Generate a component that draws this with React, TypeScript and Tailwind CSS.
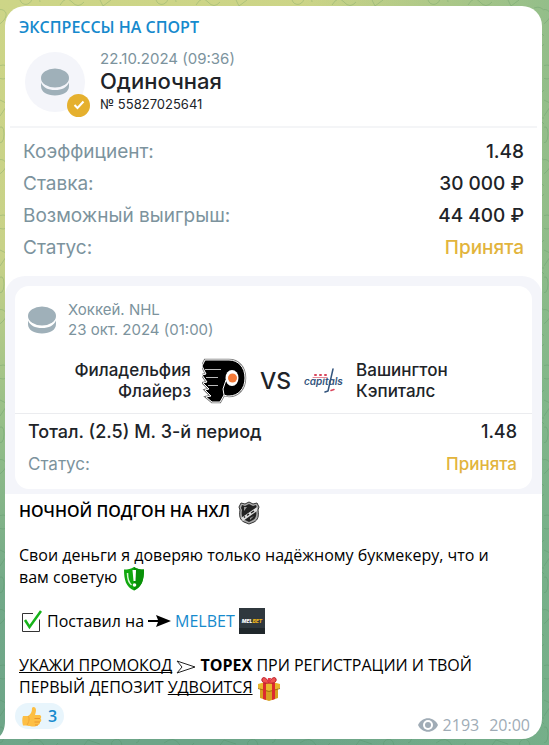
import type { ReactNode } from 'react';

const details = [
  { label: 'Коэффициент:', value: '1.48' },
  { label: 'Ставка:', value: '30 000 ₽' },
  { label: 'Возможный выигрыш:', value: '44 400 ₽' },
  { label: 'Статус:', value: 'Принята', accepted: true },
];

function Doodles() {
  return (
    <svg className="absolute inset-0 h-full w-full" fill="none" stroke="#3f7d4c" strokeOpacity="0.22" aria-hidden="true">
      <defs>
        <pattern id="doodles" width="136" height="150" patternUnits="userSpaceOnUse">
          <path d="M-6 12c8-6 16 0 10 8s-14 4-10 14" />
          <circle cx="3" cy="72" r="7" />
          <path d="M0 100l8 4-8 12M-4 130q8-8 8 4t-8 8" />
          <path d="M20 0c2 6 10 6 12-1s8-2 8 3M60 5q6-10 12-3t12 0M100 0l3 6 8-6" />
          <path d="M28 143q10-8 16 2t14-2M80 150l8-10 12 4M112 146a5 5 0 1 1 8 2" />
          <circle cx="132" cy="40" r="6" />
          <path d="M126 8c10-4 10 8 18 4M126 100l14-14M130 118h12v12z" />
        </pattern>
      </defs>
      <rect width="100%" height="100%" fill="url(#doodles)" stroke="none" />
    </svg>
  );
}

function Puck() {
  return (
    <svg width="30" height="28" viewBox="0 0 30 28" fill="#9fb0b9" aria-hidden="true">
      <ellipse cx="15" cy="10" rx="14" ry="9.5" />
      <path d="M1 14.500c2 5 7 7.500 14 7.500s12-2.500 14-7.500V18c0 6-6 9.500-14 9.500S1 24 1 18z" />
    </svg>
  );
}

function FlyersLogo() {
  return (
    <svg width="46" height="46" viewBox="0 0 46 46" aria-hidden="true">
      <path
        d="M3 2h24c9 0 16 7 16 18s-7 18-16 18c-2 0-4-.5-5-1l-4 7h-8l-6-5 5-1-6-6 4-1-6-6 4-1-5-7 4-1-4-8z"
        fill="#000"
        stroke="#777"
        strokeWidth="2.500"
      />
      <path
        d="M3 2h24c9 0 16 7 16 18s-7 18-16 18c-2 0-4-.5-5-1l-4 7h-8l-6-5 5-1-6-6 4-1-6-6 4-1-5-7 4-1-4-8z"
        fill="#000"
        stroke="#fff"
        strokeWidth="1"
      />
      <path d="M3 11.500h16M4 19.500h12M6 27.500h10" fill="none" stroke="#bbb" strokeWidth="1" />
      <path d="M22 37l-1-6 3-9" fill="none" stroke="#fff" strokeWidth="1" />
      <ellipse cx="30" cy="20" rx="6.500" ry="8" fill="#fff" />
      <circle cx="30.500" cy="20" r="4.500" fill="#f47a38" />
    </svg>
  );
}

function CapitalsLogo() {
  return (
    <svg width="42" height="26" viewBox="0 0 42 26" fill="none" strokeLinecap="round" strokeLinejoin="round" aria-hidden="true">
      <text x="1" y="17" fontSize="10" fontWeight="600" fontStyle="italic" fontFamily="Inter, sans-serif" fill="#34557d">
        capitals
      </text>
      <path d="M30 1l-5 22-3 1" stroke="#34557d" strokeWidth="1.500" />
      <path d="M10 9.500h14" stroke="#e58a98" strokeWidth="1" />
      <path d="M12 7h1M17 7h1M22 7h1" stroke="#d9435a" strokeWidth="2" />
      <path d="M28 22.500l3-1" stroke="#d9435a" strokeWidth="1.500" />
    </svg>
  );
}

function NhlIcon() {
  return (
    <svg className="ml-1 inline-block align-middle" width="22" height="24" viewBox="0 0 22 24" aria-hidden="true">
      <path d="M3 2l4 1 4-2 4 2 4-1 2 4-1 3c1 6 0 10-4 12l-5 2-5-2c-4-2-5-6-4-12L1 6z" fill="#aaa" stroke="#333" strokeWidth="1" />
      <path d="M4 4l3 1 4-2 4 2 3-1 1 3-1 2c1 5 0 8-3 10l-4 2-4-2c-3-2-4-5-3-10L3 7z" fill="#222" />
      <path d="M3 17L19 6v4L5 20z" fill="#ddd" />
      <path d="M6 16.500l1-1M9 14.500l2-1.500M13 12l3-2" stroke="#222" strokeWidth="1.500" />
      <path d="M6 6h3l-3 4zM16 15l-4 4v-2z" fill="#999" />
    </svg>
  );
}

function ShieldIcon() {
  return (
    <svg className="ml-[2px] inline-block align-middle" width="22" height="25" viewBox="0 0 22 25" aria-hidden="true">
      <path d="M11 1c3 2 6 2.500 10 2.500C21 14 19 21 11 24.500 3 21 1 14 1 3.500 5 3.500 8 3 11 1z" fill="#11a80f" />
      <path d="M11 1c3 2 6 2.500 10 2.500C21 14 19 21 11 24.500z" fill="#099008" />
      <path d="M9.500 4h3.500l-.5 11h-2z" fill="#fff" />
      <circle cx="11.500" cy="19" r="1.800" fill="#fff" />
      <path d="M4.500 7c0 6 1 9.500 4 12" fill="none" stroke="#d9f5d4" strokeWidth="1.500" />
    </svg>
  );
}

function CheckIcon() {
  return (
    <svg width="24" height="24" viewBox="0 0 24 24" fill="none" aria-hidden="true">
      <path d="M14 4.500H3.500v18h17v-12" stroke="#333" strokeWidth="1" />
      <path d="M6 11l4.500 7L22 2" stroke="#17b31a" strokeWidth="2.500" />
    </svg>
  );
}

function MelbetIcon() {
  return (
    <svg width="26" height="26" viewBox="0 0 26 26" aria-hidden="true">
      <rect width="26" height="26" fill="#2f383e" />
      <path d="M0 20h26v6H0z" fill="#20272b" />
      <text x="13" y="15" textAnchor="middle" fontSize="5" fontWeight="800" fontStyle="italic" fontFamily="Inter, sans-serif" fill="#fff">
        MEL<tspan fill="#f0b517">BET</tspan>
      </text>
    </svg>
  );
}

function GiftIcon() {
  return (
    <svg className="inline-block align-middle" width="24" height="24" viewBox="0 0 24 24" aria-hidden="true">
      <path d="M3 11l9 2 9-2v10l-9 3-9-3z" fill="#d7a021" />
      <path d="M1 7l11-3 11 3v4l-11 3L1 11z" fill="#e9b72e" />
      <path d="M1 11l11 3 11-3v1l-11 3-11-3z" fill="#a5700e" />
      <path d="M6 6l3-1v18l-3-1zM15 5l3 1v16l-3 1z" fill="#dd2a2f" />
      <path d="M12 6C8 7 4 5 5 2s5-1 7 4c2-5 6-7 7-4s-3 5-7 4z" fill="#ef5350" stroke="#b71c2a" strokeWidth="1" />
      <path d="M10 5l1-4h3l-1 5z" fill="#e53945" />
    </svg>
  );
}

function ThumbIcon() {
  return (
    <svg width="20" height="21" viewBox="0 0 20 21" aria-hidden="true">
      <path
        d="M1 10h5c3-2 4-4 4-8 1-2 4-1 4 2 0 2-.5 3-1 5h4c2 0 3 2 1.500 3.500C20 14 19 16 18 16c0 2-1 3-2 3-1 1.500-3 1.500-5 1.500-3 0-5-1-10-1-1-3-1-7 0-9.500z"
        fill="#fdbf45"
      />
      <path d="M12.500 12.500h5.500M12.500 16h5.500M13 19h3" stroke="#e8952e" strokeWidth="1" />
      <path d="M6 10c2 2 1 6-1 9" fill="none" stroke="#f0a535" strokeWidth="1" />
    </svg>
  );
}

function DetailRow({ label, children, accepted }: { label: string; children: ReactNode; accepted?: boolean }) {
  return (
    <div className="flex justify-between">
      <dt className="text-[#7c939d]">{label}</dt>
      <dd className={accepted ? 'font-medium text-[#e2b43c]' : 'font-medium text-[#202328]'}>{children}</dd>
    </div>
  );
}

function BetSlip() {
  return (
    <section className="font-[Inter,sans-serif]">
      <header className="mx-[5px] flex items-center gap-[15px] border-b-2 border-[#f4f5f7] px-[15px] pt-[9px] pb-3">
        <div className="relative flex h-[60px] w-[60px] items-center justify-center rounded-full bg-[#f4f5fa]">
          <Puck />
          <span className="absolute -right-[5px] -bottom-[5px] flex h-[23px] w-[23px] items-center justify-center rounded-full bg-[#e5b02e]">
            <svg width="12" height="10" viewBox="0 0 12 10" fill="none" aria-hidden="true">
              <path d="M1.500 5l3 3 6-6.500" stroke="#fff" strokeWidth="2" />
            </svg>
          </span>
        </div>
        <div className="text-[#202328]">
          <p className="text-[15px] leading-5 text-[#7c939d]">22.10.2024 (09:36)</p>
          <h2 className="text-[22px] leading-[25px] font-medium">Одиночная</h2>
          <p className="text-[13px] leading-5">№ 55827025641</p>
        </div>
      </header>

      <dl className="px-[18px] pt-2 pb-3 text-[19px] leading-8">
        {details.map((row) => (
          <DetailRow key={row.label} label={row.label} accepted={row.accepted}>
            {row.value}
          </DetailRow>
        ))}
      </dl>

      <div className="rounded-t-[20px] bg-[#f4f5fa] px-[10px] pt-[10px] pb-[5px]">
        <div className="rounded-[14px] bg-white">
          <div className="flex items-center gap-[11px] px-3 pt-[14px] text-[15px] leading-5 text-[#7c939d]">
            <Puck />
            <div>
              <p>Хоккей. NHL</p>
              <p>23 окт. 2024 (01:00)</p>
            </div>
          </div>

          <div className="mt-[18px] flex items-center justify-center border-b border-[#ebecef] pb-[9px] text-[17px] leading-[21px] font-medium text-[#202328]">
            <p className="flex-1 text-right">
              Филадельфия
              <br />
              Флайерз
            </p>
            <div className="flex items-center gap-3 px-[11px]">
              <FlyersLogo />
              <span className="text-[23px]">VS</span>
              <CapitalsLogo />
            </div>
            <p className="flex-1">
              Вашингтон
              <br />
              Кэпиталс
            </p>
          </div>

          <dl className="pt-px pr-[15px] pb-2 pl-[13px] text-[17px] leading-[33px]">
            <div className="flex justify-between text-[18px] font-medium text-[#202328]">
              <dt>Тотал. (2.5) М. 3-й период</dt>
              <dd>1.48</dd>
            </div>
            <DetailRow label="Статус:" accepted>
              Принята
            </DetailRow>
          </dl>
        </div>
      </div>
    </section>
  );
}

export default function App() {
  return (
    <main className="relative min-h-screen bg-[linear-gradient(90deg,transparent_55%,#7ab48ab0_100%),linear-gradient(175deg,#cdd587_0%,#c8d288_32%,#92bd88_55%,#72a988_75%,#6ca488_100%)] pt-[6px] pr-[7px] pb-[5px] pl-[5px] font-['Open_Sans',sans-serif] text-black">
      <Doodles />
      <article className="relative rounded-[20px] rounded-bl-none bg-white text-[16px] leading-[22px]">
        <svg className="absolute bottom-0 -left-[5px]" width="5" height="18" viewBox="0 0 5 18" fill="#fff" aria-hidden="true">
          <path d="M5 0C5 7 3 12 0 15v3h5z" />
        </svg>
        <h1 className="px-[14px] pt-[10px] pb-[2px] font-semibold text-[#168acd]">ЭКСПРЕССЫ НА СПОРТ</h1>
        <BetSlip />
        <div className="pt-[6px] pr-[30px] pl-[14px]">
          <p className="h-[22px] font-semibold">
            НОЧНОЙ ПОДГОН НА НХЛ <NhlIcon />
          </p>
          <p className="mt-[22px] h-11">
            Свои деньги я доверяю только надёжному букмекеру, что и вам советую <ShieldIcon />
          </p>
          <p className="mt-[22px] flex h-[22px] items-center gap-1">
            <CheckIcon />
            <span>Поставил на</span>
            <svg width="23" height="14" viewBox="0 0 23 14" aria-hidden="true">
              <path d="M0 6h10L8 1l15 6-15 6 2-5H0z" />
            </svg>
            <a href="#melbet" className="text-[#168acd]">MELBET</a>
            <MelbetIcon />
          </p>
          <p className="mt-[22px] h-11">
            <u className="[text-decoration-skip-ink:none]">УКАЖИ ПРОМОКОД</u>{' '}
            <svg className="inline-block" width="20" height="16" viewBox="0 0 20 16" fill="none" stroke="#222" aria-hidden="true">
              <path d="M1 2l18 6-18 6 5-6z" />
            </svg>{' '}
            <b className="font-bold">TOPEX</b> ПРИ РЕГИСТРАЦИИ И ТВОЙ ПЕРВЫЙ ДЕПОЗИТ{' '}
            <u className="[text-decoration-skip-ink:none]">УДВОИТСЯ</u> <GiftIcon />
          </p>
        </div>
        <footer className="flex items-end justify-between pt-[5px] pr-3 pb-[3px] pl-[10px]">
          <button type="button" className="mb-[7px] flex h-[26px] items-center gap-[6px] rounded-full bg-[#e8f5fc] px-[7px] font-semibold text-[#168acd]">
            <ThumbIcon />3
          </button>
          <div className="flex items-center text-[#a0acb6]">
            <svg className="mr-[5px]" width="20" height="14" viewBox="0 0 20 14" aria-hidden="true">
              <path d="M0 7c4-9 16-9 20 0-4 9-16 9-20 0z" fill="#a0acb6" />
              <circle cx="10" cy="7" r="5" fill="#fff" />
              <circle cx="10" cy="7" r="3" fill="#a0acb6" />
            </svg>
            <span className="mr-[10px]">2193</span>
            <time>20:00</time>
          </div>
        </footer>
      </article>
    </main>
  );
}
